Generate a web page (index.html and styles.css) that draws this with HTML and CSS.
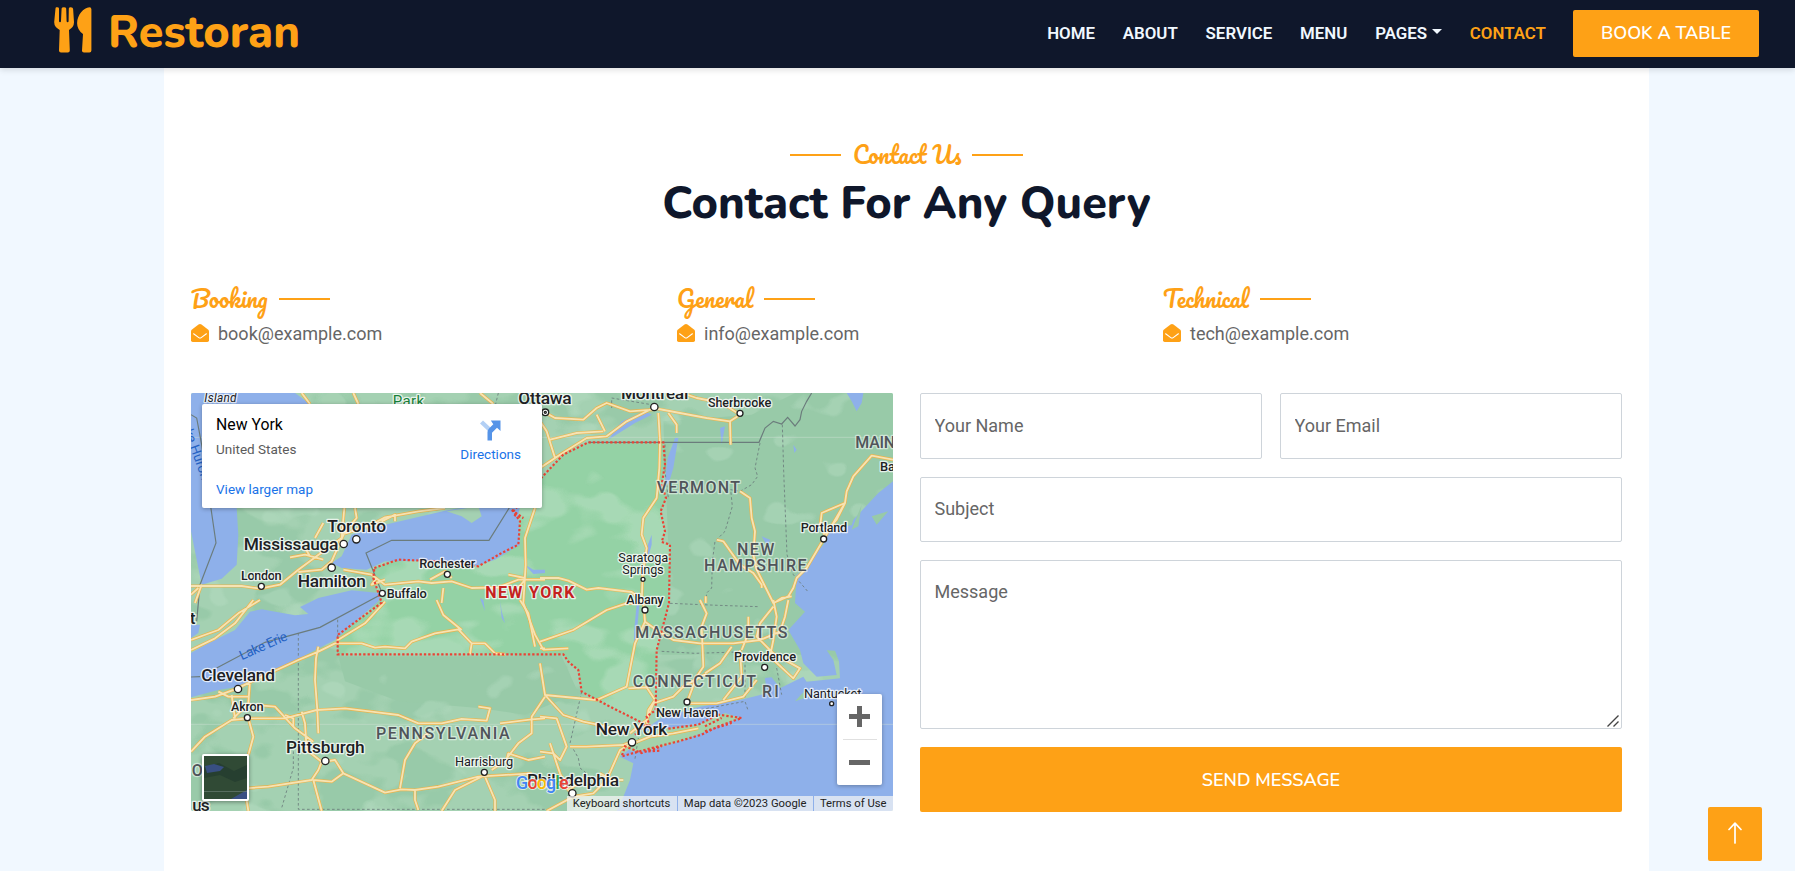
FILE: index.html
```html
<!DOCTYPE html>
<html lang="en">
<head>
<meta charset="utf-8">
<title>Restoran - Contact</title>
<link rel="stylesheet" href="styles.css">
</head>
<body>
<header class="navbar">
  <a class="brand">
    <svg class="brand-icon" viewBox="0 0 38 46" width="38" height="46"><path d="M2.3.3Q4.800-.2 5 1.500V14q0 1.200 1 1.200t1-1.200L7.600 1.500Q7.800.2 9.900.2t2.300 1.300l.4 12.500q0 1.200 1 1.200t1-1.200L14.800 1.500Q15 .1 16.900.2q2 0 2.200 1.500L20 15q.2 5-5 8l.8 20.500q0 2-2 2H7q-2 0-2-2L5.700 23Q0 20 .2 15L1.500 1.500Q1.700.4 2.300.3zM35.500.2q1.900 0 1.900 2v41.300q0 2-2 2H30q-2.200 0-2-2l1-16.500q-6-4.300-5.900-11C23.300 8 29.500.3 35.500.2z" fill="#fea116"/></svg>
    <span class="brand-name">Restoran</span>
  </a>
  <nav class="menu">
    <a>HOME</a><a>ABOUT</a><a>SERVICE</a><a>MENU</a><a class="drop">PAGES</a><a class="active">CONTACT</a>
  </nav>
  <a class="btn book">BOOK A TABLE</a>
</header>
<main class="container">
  <div class="heading">
    <h5 class="script lined"><span class="w-contact">Contact Us</span></h5>
    <h1>Contact For Any Query</h1>
  </div>
  <div class="mails">
    <div><h5 class="script"><span class="w-booking">Booking</span></h5>
      <p><svg class="env" viewBox="0 0 18 18"><path d="M0 7.200q0-.8.700-1.400L7.500.6Q9-.5 10.500.6l6.800 5.200q.7.600.7 1.400v9.100q0 1.700-1.700 1.700H1.700Q0 18 0 16.300z" fill="#fea116"/><path d="M2.600 9.800 7.800 13.600Q9 14.500 10.200 13.600L15.400 9.800" fill="none" stroke="#fff" stroke-width="1.100" stroke-linecap="round"/></svg>book@example.com</p></div>
    <div><h5 class="script"><span class="w-general">General</span></h5>
      <p><svg class="env" viewBox="0 0 18 18"><path d="M0 7.200q0-.8.700-1.400L7.500.6Q9-.5 10.500.6l6.800 5.200q.7.600.7 1.400v9.100q0 1.700-1.700 1.700H1.700Q0 18 0 16.300z" fill="#fea116"/><path d="M2.600 9.800 7.800 13.600Q9 14.500 10.200 13.600L15.400 9.800" fill="none" stroke="#fff" stroke-width="1.100" stroke-linecap="round"/></svg>info@example.com</p></div>
    <div><h5 class="script"><span class="w-technical">Technical</span></h5>
      <p><svg class="env" viewBox="0 0 18 18"><path d="M0 7.200q0-.8.700-1.400L7.500.6Q9-.5 10.500.6l6.800 5.200q.7.600.7 1.400v9.100q0 1.700-1.700 1.700H1.700Q0 18 0 16.300z" fill="#fea116"/><path d="M2.600 9.800 7.800 13.600Q9 14.500 10.200 13.600L15.400 9.800" fill="none" stroke="#fff" stroke-width="1.100" stroke-linecap="round"/></svg>tech@example.com</p></div>
  </div>
  <div class="columns">
    <div class="map">
      <svg class="map-canvas" viewBox="18 15 2106 1254" width="702" height="418">
        <defs>
          <filter id="light" x="0" y="0" width="1" height="1" color-interpolation-filters="sRGB"><feTurbulence type="fractalNoise" baseFrequency=".008 .012" numOctaves="2" seed="4"/><feColorMatrix values="0 0 0 0 .72  0 0 0 0 .87  0 0 0 0 .77  14 0 0 0 -8.900"/><feComposite in2="SourceGraphic" operator="in"/></filter>
          <filter id="dark" x="0" y="0" width="1" height="1" color-interpolation-filters="sRGB"><feTurbulence type="fractalNoise" baseFrequency=".005 .008" numOctaves="3" seed="11"/><feColorMatrix values="0 0 0 0 .59  0 0 0 0 .79  0 0 0 0 .655  0 14 0 0 -7.500"/><feComposite in2="SourceGraphic" operator="in"/></filter>
          <filter id="nylight" x="0" y="0" width="1" height="1" color-interpolation-filters="sRGB"><feTurbulence type="fractalNoise" baseFrequency=".004 .007" numOctaves="3" seed="8"/><feColorMatrix values="0 0 0 0 .67  0 0 0 0 .86  0 0 0 0 .72  12 0 0 0 -6.300"/><feComposite in2="SourceGraphic" operator="in"/></filter>
          <path id="ny" d="M568 540 640 515 760 520 880 535 950 495 1000 470 1005 400 985 370 1073 265 1135 200 1210 163H1435L1440 230 1430 290 1443 330 1427 370 1440 430 1430 462 1455 470 1452 645 1415 786 1412 966 1385 986 1395 1016 1345 991 1275 956 1190 911 1180 846 1150 821 1135 799H458V741L590 644 565 570z"/>
          <path id="li" d="M1320 1078 1350 1050 1380 1030 1450 1020 1540 1010 1620 975 1665 990 1600 1015 1500 1055 1400 1085 1340 1090z"/>
          <g id="roads">
            <path d="M18 594H170L225 602 285 590 340 545 415 490 470 450 478 360M510 360 515 390 480 430 440 520 410 545 340 552M315 508 360 500 415 515M360 480 375 505M390 450 415 405M470 440 560 410 600 388 700 370 780 360M590 400 630 380V400M475 545 560 560 600 590 700 580 740 585 800 580 860 600 940 598 1000 575H1080M735 575 780 550 800 570M770 645 775 600M50 590 30 645M18 620 40 600M575 570 560 590 600 575"/>
            <path d="M350 15 375 48M505 15 520 48M885 15 925 48M1050 360 1020 450 1022 530 1015 645 1050 740 1075 785 1150 781M970 560 1020 570M1000 600 1020 575M1065 570H1120L1150 578 1205 605 1240 600 1340 612 1375 640"/>
            <g transform="translate(1065)"><path d="M0 240 60 200 140 150 200 145 260 100 340 60 420 75 500 90 570 100 600 80 545 45 470 30 425 15M0 65 45 90 130 95 170 60 200 45 270 70 340 65M0 100 20 130 45 210M30 155 110 135 190 130M170 80 195 130M355 75 360 163 358 240 350 330 310 390 305 440 320 480 308 560 305 645M385 75 410 110V135M570 100 572 170M600 310 630 330 635 390 645 430 640 500 650 545 700 645 745 625 760 600 770 570 800 540 850 455 915 345 920 310 940 265 995 203 1059 215M840 420 845 375 915 345M530 455 550 460 600 530 640 555 665 590 665 600M497 625V645M710 640 725 630 755 625M850 440 890 395 915 345"/></g>
            <g transform="translate(0 636)"><path d="M18 120 100 90 160 40 225 0M18 150 90 115 150 70 205 0M18 300 90 290 150 268 200 245 275 210 340 180 400 155 450 130 530 130 570 143 600 140 660 145 680 125 750 100 820 88 860 130 900 130 930 160 960 163M600 5 540 70 455 122M755 0 775 45 830 90M860 130 855 163M400 140 393 175 390 240 397 330 400 400M195 240 190 310 145 355M18 455 60 410 140 360 190 355H300L395 330 480 325 560 335 640 345 700 370 770 370 830 357 905 362 915 325 880 320M945 370 1040 358 1080 355M100 275 130 290 190 290M210 315 270 320 330 385 385 425M140 285 150 355M300 345 325 355V380M350 335 360 370 365 450 410 485 400 510 380 540 250 560 180 565 110 570M190 355 205 410 190 465M420 485 450 480 475 520 540 550 600 578 650 568 690 570 760 560 880 530 1040 520M475 520 440 545 385 540 410 633M645 565 660 480 690 430 730 400M890 530 810 570 770 633M900 530 930 600V633M690 570V600L700 630M1080 470 1030 480 970 460 965 480 920 510M1005 0 1030 40 1050 140M1080 290 1040 350V400L1000 430 965 475M180 570 190 633"/></g>
            <g transform="translate(1065 636)"><path d="M0 145 15 145M0 125 100 90 200 30 260 10 310 10M310 0 315 65 285 130 260 260 170 300 15 285 0 190M15 285 70 345 130 365 200 380 260 400M265 265 320 262 345 300 325 330 320 380M315 65 350 90 400 120 480 130 580 130 660 120 720 95 735 50 745 0M480 0 500 40 485 80 490 200 470 230 440 310M495 220 540 190 575 140M600 150 605 230 550 300M270 400 320 360 340 310 400 290 430 260 500 220M440 310 530 310 610 290 650 240M700 0 710 50 700 120 690 170 760 235 780 205 700 160 650 110 660 70 700 20M625 50 625 100 605 150M0 350 50 355 80 440 60 480 40 460 0 455M90 440 140 440 250 435 275 425M275 430 240 450 200 540 160 580 100 590 20 633M30 430 60 520 85 570 130 540M250 540H215L180 520M280 430 330 410 400 400 475 385"/></g>
          </g>
        </defs>
        <rect x="18" y="15" width="2106" height="1254" fill="#a4d1b2"/>
        <rect x="18" y="15" width="2106" height="1254" filter="url(#dark)" opacity=".8"/>
        <path d="M1435 100 1700 80 1830 15H2124V800H1415L1455 600z" fill="#98caa8"/>
        <path d="M460 805H1130L1180 915 1020 980 880 960 640 940 480 880z" fill="#98caa8"/>
        <rect x="18" y="15" width="2106" height="1254" filter="url(#light)" opacity=".4"/>
        <use href="#ny" fill="#94d2a5"/>
        <use href="#ny" filter="url(#nylight)" opacity=".85"/>
        <g fill="#8eb0ea">
          <path d="M18 15H330L375 48 155 360 160 440 155 530 110 572 50 590 18 430z"/>
          <path d="M470 505 500 440 600 410 780 368 1010 330 1000 380 1005 470 930 515 870 535 780 518 600 520 545 545 470 540 440 525z"/>
          <path d="M590 616 500 607 400 630 345 657 370 678 330 682 230 664 195 671 150 726 60 771 18 795V928L100 906 150 898 280 846 390 786 450 756 580 640z"/>
          <path d="M18 710H45L40 735 18 750zM1020 530 1045 545H1080V555L1045 558z"/>
          <path d="M1470 150H1480L1465 240 1450 290 1440 280 1448 210zM1310 100 1380 70 1400 80 1350 105 1270 155z"/>
          <path d="M2124 280 2080 315 2005 395 2000 412 1935 420 1915 470 1880 510 1865 540 1835 560 1830 645 1860 671 1810 726 1845 786 1855 826 1895 866 1955 861 1945 816 1925 787 1950 788 1962 820 1965 871 1865 881 1855 866 1785 901 1760 868 1740 870 1745 916 1665 936 1545 956 1435 986 1375 1026 1355 1066 1305 1106 1345 1126 1335 1176 1315 1226 1295 1269H2124z"/>
          <path d="M1985 15 2000 40 2015 70 2030 45 2035 15zM1605 120 1620 115 1610 170zM1400 440 1385 480 1370 540 1380 540 1400 470zM1356 640 1364 640 1355 740 1345 820 1348 720zM885 630 895 636 900 670zM945 636 950 670 960 706 950 690zM1825 170 1835 185 1828 195zM1730 445 1755 455 1748 475z"/>
        </g>
        <path d="M2110 370 2075 410 2060 385zM2030 350 2000 425 2020 415zM1950 390 1970 420 1985 370zM1830 940 1865 902 1860 930z" fill="#98caa8"/>
        <use href="#li" fill="#a4d3aa"/>
        <path d="M785 370 880 355 890 385 860 405 830 385z" fill="#a4d1b2"/>
        <path d="M18 148H2124M18 1009H2124" stroke="#d0dfd8" stroke-opacity=".45" stroke-width="3"/>
        <g fill="none" stroke="#6b7c7c" stroke-width="3.500">
          <path d="M18 80 35 90 50 170 93 465 45 590 35 700M980 348 912 457H620L543 495 592 617 405 718 240 763 95 840M1210 163H1722L1740 120 1765 100 1790 108 1808 88 1830 114 1845 95 1850 70 1865 40 1880 15M18 867 45 866"/>
          <path stroke-width="2.500" stroke-dasharray="8 7" d="M1725 165 1710 240 1718 265 1700 290 1665 310 1637 305 1642 355 1620 430 1590 460 1582 520 1580 600 1565 615 1562 645M1792 110 1796 250 1806 500 1825 560 1868 610M340 735V1264H1080M458 695V800M1455 646 1600 652 1720 656M1430 790 1530 796 1660 792M1680 800V930M1440 170V250L1450 330M940 15 932 48M325 1090 325 1140 290 1260M1190 911 1155 1066 1180 1110 1185 1140 1210 1160M1280 60V30L1400 50M1350 1112 1360 1050M1520 970 1680 940 1690 970M1775 840 1790 920"/>
        </g>
        <use href="#roads" fill="none" stroke="#e9b44d" stroke-width="9.500" stroke-linejoin="round"/>
        <use href="#roads" fill="none" stroke="#f6e3b3" stroke-width="5.500" stroke-linejoin="round"/>
        <g fill="none" stroke="#ea4335" stroke-width="6.500" stroke-dasharray="7 6"><use href="#ny"/><path d="M980 366 1015 390 985 380M1450 1022 1540 1010 1600 980 1670 990 1600 1015 1550 1040 1480 1060 1400 1080 1310 1105 1320 1075 1370 1095 1430 1075M1380 1010 1350 1040M1560 1015 1610 990M1560 1030 1640 1005M1390 1090 1425 1088"/></g>
        <g class="dots" fill="#fff" stroke="#222" stroke-width="4">
          <circle cx="514" cy="454" r="11"/><circle cx="476" cy="468" r="11"/><circle cx="440" cy="539" r="11"/><circle cx="229" cy="595" r="9"/><circle cx="787" cy="559" r="9"/><circle cx="592" cy="616" r="9"/><circle cx="1408" cy="57" r="11"/><circle cx="1665" cy="76" r="9"/><circle cx="1916" cy="453" r="9"/><circle cx="1374" cy="574" r="6"/><circle cx="1380" cy="666" r="9"/><circle cx="1739" cy="838" r="9"/><circle cx="1506" cy="942" r="9"/><circle cx="1341" cy="1063" r="11"/><circle cx="1162" cy="1216" r="11"/><circle cx="159" cy="903" r="11"/><circle cx="187" cy="989" r="9"/><circle cx="421" cy="1119" r="11"/><circle cx="898" cy="1153" r="9"/><circle cx="1940" cy="947" r="6"/><circle cx="1081" cy="73" r="10"/><circle cx="1081" cy="73" r="3"/>
        </g>
        <g class="labels big">
          <text x="427" y="431" textLength="176">Toronto</text><text x="176" y="486" textLength="284">Mississauga</text><text x="338" y="597" textLength="205">Hamilton</text><text x="1000" y="48" textLength="160">Ottawa</text><text x="1308" y="33" textLength="202">Montréal</text><text x="49" y="880" textLength="221">Cleveland</text><text x="303" y="1096" textLength="236">Pittsburgh</text><text x="1232" y="1040" textLength="215">New York</text><text x="1026" y="1194" textLength="276">Philadelphia</text><text x="22" y="1270" textLength="52">us</text><text x="14" y="707">t</text>
        </g>
        <g class="labels small">
          <text x="168" y="576" textLength="122">London</text><text x="703" y="540" textLength="168">Rochester</text><text x="605" y="629" textLength="120">Buffalo</text><text x="1569" y="57" textLength="190">Sherbrooke</text><text x="1847" y="433" textLength="140">Portland</text><text x="1324" y="647" textLength="112">Albany</text><text x="138" y="970" textLength="98">Akron</text><text x="1647" y="818" textLength="186">Providence</text><text x="1413" y="986" textLength="187">New Haven</text><text x="2085" y="249">Bangor</text>
          <g class="thin"><text x="1300" y="521" textLength="150">Saratoga</text><text x="1312" y="558" textLength="124">Springs</text><text x="810" y="1134" textLength="175">Harrisburg</text><text x="1857" y="930" textLength="172">Nantucket</text></g>
        </g>
        <g class="labels states">
          <text x="1415" y="314" textLength="250">VERMONT</text><text x="1656" y="502" textLength="112">NEW</text><text x="1557" y="550" textLength="308">HAMPSHIRE</text><text x="2011" y="180" textLength="146">MAINE</text><text x="1351" y="749" textLength="456">MASSACHUSETTS</text><text x="1343" y="898" textLength="370">CONNECTICUT</text><text x="1731" y="928" textLength="50">RI</text><text x="573" y="1053" textLength="401">PENNSYLVANIA</text><text x="20" y="1163" textLength="70">OH</text>
        </g>
        <text class="ny-label" x="901" y="629" textLength="267">NEW YORK</text>
        <text class="park" x="623" y="54" textLength="94">Park</text>
        <text class="island" x="58" y="42" textLength="97">Island</text>
        <text class="lake" x="170" y="817" textLength="153" transform="rotate(-24 170 817)">Lake Erie</text>
        <text class="lake" x="-18" y="88" transform="rotate(70 -18 88)">Lake Huron</text>
      </svg>
      <div class="place">
        <strong>New York</strong><span class="country">United States</span><a class="larger">View larger map</a>
        <div class="directions"><svg viewBox="0 0 21 21" width="21" height="21"><path d="m0 3.500 3-3L10.500 7.500 8 11z" fill="#b3d0f5"/><path d="M7.500 20.500V12q0-2 1.500-3.500L13.300 4.200 10.800.5H20.500V11L17 7.700l-5 5V20.500z" fill="#5694e8"/></svg><span>Directions</span></div>
      </div>
      <div class="sat"><svg viewBox="0 0 43 43" width="43" height="43"><rect width="43" height="43" fill="#263f30"/><path d="M0 0H43V9L30 15 15 7 0 11zM0 22 16 19 31 26 43 22V43H0z" fill="#304a35"/><path d="M1 10 10 8 20 11 16 15 3 17zM34 39 43 34V43H27z" fill="#384f82"/><path d="M0 35.500H43" stroke="#71867b" stroke-opacity=".6"/></svg></div>
      <div class="google"><span class="b">G</span><span class="r">o</span><span class="y">o</span><span class="b">g</span><span class="g">l</span><span class="r">e</span></div>
      <div class="zoom"><i class="plus"></i><hr><i class="minus"></i></div>
      <div class="credits"><span>Keyboard shortcuts</span><span>Map data ©2023 Google</span><span>Terms of Use</span></div>
    </div>
    <form class="form">
      <input class="field" placeholder="Your Name"><input class="field" placeholder="Your Email">
      <input class="field wide" placeholder="Subject">
      <div class="message wide"><textarea class="field" placeholder="Message"></textarea><svg class="grip" viewBox="0 0 12 12" width="12" height="12"><path d="M.5 11.500 11.500.5M6.500 11.500 11.500 6.500" stroke="#444" stroke-width="1.400"/></svg></div>
      <button class="btn wide" type="button">SEND MESSAGE</button>
    </form>
  </div>
</main>
<a class="top"><svg viewBox="0 0 14 22" width="14" height="22"><path d="M7 21V1.500M1 7.500 7 1.200 13 7.500" fill="none" stroke="#fff" stroke-width="1.700" stroke-linecap="round" stroke-linejoin="round"/></svg></a>
</body>
</html>
```
FILE: styles.css
```css
* { box-sizing: border-box; }
body { margin: 0; height: 871px; overflow: hidden; background: #f1f8ff; color: #666; font: 18px/27px Roboto, sans-serif; }
h1, h5, p { margin: 0; }
.navbar { position: relative; z-index: 2; height: 68px; padding: 0 36px 0 54px; display: flex; align-items: center; background: #0f172b; box-shadow: 0 2px 6px rgba(0, 0, 0, .13); }
.brand { display: flex; align-items: center; height: 60px; align-self: flex-start; }
.brand-icon { display: block; }
.brand-name { margin-left: 16px; padding-top: 5px; color: #fea116; font: 800 45px/60px Nunito, Lato, sans-serif; }
.menu { margin-left: auto; padding-bottom: 2px; display: flex; gap: 27.8px; align-items: center; color: #f1f8ff; font-weight: 600; font-size: 16.875px; }
.menu a { white-space: nowrap; }
.menu .active { color: #fea116; }
.drop::after { content: ""; display: inline-block; margin-left: 5px; vertical-align: 5px; border: 5px solid transparent; border-top-color: #f1f8ff; border-bottom: 0; }
.btn { display: flex; align-items: center; justify-content: center; border: 0; border-radius: 2px; background: #fea116; color: #fff; font: 600 18px Nunito, Lato, sans-serif; white-space: nowrap; }
.book { width: 186px; height: 47px; margin-left: 27px; margin-bottom: 1px; padding-bottom: 1px; }
.container { width: 1485px; height: 803px; margin: 0 0 0 164px; padding: 71px 27px 0; background: #fff; }
.heading { text-align: center; }
.script { display: flex; align-items: center; height: 32px; color: #fea116; font: 400 22.5px/32px Pacifico, Lato, cursive; }
.script span { white-space: nowrap; flex: none; }
.script::after, .lined::before { content: ""; width: 51px; height: 2px; background: #fea116; flex: none; }
.lined { justify-content: center; }
.lined span { margin: 0 11px 0 12px; }
.w-contact { width: 108px; }
.w-booking { width: 88px; }
.w-general { width: 87px; }
.w-technical { width: 97px; }
h1 { margin-top: 6px; color: #0f172b; font: 800 45px/54px Nunito, Lato, sans-serif; }
.mails { display: grid; grid-template-columns: repeat(3, 1fr); gap: 27px; margin-top: 52px; }
.mails p { display: flex; align-items: center; height: 27px; margin-top: 5px; }
.env { width: 18px; height: 18px; margin: 0 9px 2px 0; }
.columns { display: grid; grid-template-columns: 702px 702px; gap: 27px; margin-top: 46px; }
.map { position: relative; height: 418px; overflow: hidden; }
.map-canvas { display: block; border-radius: 2px; }
.labels text, .ny-label, .park, .island, .lake { paint-order: stroke; stroke: #fff; stroke-opacity: .75; stroke-width: 8px; stroke-linejoin: round; fill: #202124; }
.big { font-size: 52px; font-weight: 500; }
.small { font-size: 38.5px; font-weight: 500; }
.thin { font-weight: 400; }
.labels.states text { font-size: 48px; font-weight: 500; fill: #50545a; stroke-opacity: .5; }
.ny-label { font-size: 48px; font-weight: 700; fill: #c5221f; }
.park { font-size: 45px; fill: #188038; }
.island { font-size: 36px; font-style: italic; }
.labels ~ .lake { font-size: 40px; fill: #2562c4; stroke: none; }
.place { position: absolute; left: 11px; top: 11px; width: 340px; height: 104px; padding: 11px 14px; background: #fff; border-radius: 2px; box-shadow: 0 1px 4px rgba(0, 0, 0, .3); display: flex; flex-direction: column; font-size: 13.5px; line-height: 20px; }
.place strong { color: #000; font-size: 15.8px; font-weight: 450; }
.country { margin-top: 4px; color: #5b5b5b; }
.larger { margin-top: 20px; color: #1a73e8; }
.directions { position: absolute; right: 21px; top: 16px; display: flex; flex-direction: column; align-items: center; color: #1a73e8; }
.directions span { margin-top: 3px; }
.sat { position: absolute; left: 11px; top: 361px; width: 47px; height: 47px; border: 2px solid #fff; border-radius: 2px; box-shadow: 0 1px 4px rgba(0, 0, 0, .4); }
.sat svg { display: block; }
.google { position: absolute; left: 325px; top: 378px; font: 500 18px/24px Roboto, sans-serif; -webkit-text-stroke: 2px rgba(255,255,255,.65); paint-order: stroke; letter-spacing: -.9px; }
.b { color: #4285f4; } .r { color: #ea4335; } .y { color: #fbbc04; } .g { color: #34a853; }
.zoom { position: absolute; left: 646px; top: 301px; width: 45px; height: 91px; border-radius: 2px; background: #fff; box-shadow: 0 1px 4px rgba(0, 0, 0, .3); display: flex; flex-direction: column; align-items: center; }
.zoom i { width: 21px; background: linear-gradient(#666, #666) center/21px 5px no-repeat; height: 21px; }
.zoom .plus { margin-top: 12px; background: linear-gradient(#666, #666) center/21px 5px no-repeat, linear-gradient(#666, #666) center/5px 21px no-repeat; }
.zoom hr { width: 34px; height: 1px; margin: 12px 0; border: 0; background: #e0e0e0; }
.credits { position: absolute; right: 0; bottom: 0; height: 15px; display: flex; gap: 1px; color: #222; font-size: 11.250px; line-height: 16px; }
.credits span { padding: 0 6.500px 0 6px; background: rgba(245, 245, 245, .72); white-space: nowrap; }
.form { display: grid; grid-template-columns: 342px 342px; grid-template-rows: 66px 65px 169px 65px; gap: 18px; }
.wide { grid-column: 1 / 3; }
.field { display: block; width: 100%; height: 100%; margin: 0; padding: 0 13.500px 2px; border: 1px solid #ced4da; border-radius: 2px; color: #666; background: #fff; font: 18px/27px Roboto, sans-serif; outline: 0; }
.message { position: relative; }
.grip { position: absolute; right: 3px; bottom: 2px; }
textarea.field { padding-top: 17px; resize: none; }
.field::placeholder { color: #666; opacity: 1; }
.top { position: absolute; left: 1708px; top: 807px; width: 54px; height: 54px; border-radius: 2px; background: #fea116; display: flex; align-items: center; justify-content: center; padding-bottom: 3px; }
```
